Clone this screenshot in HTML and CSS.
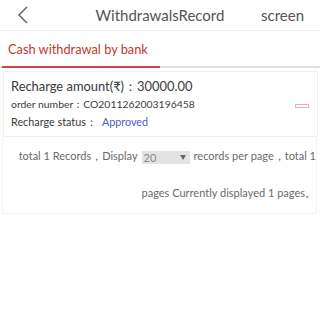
FILE: index.html
```html
<!DOCTYPE html>
<html>
<head>
<meta charset="utf-8">
<link rel="stylesheet" href="styles.css">
</head>
<body>
<div class="page">
  <header class="topbar">
    <svg class="back" width="12" height="18" viewBox="0 0 12 18"><path d="M10 1 L2 9 L10 17" fill="none" stroke="#666" stroke-width="1.5"/></svg>
    <div class="title">WithdrawalsRecord</div>
    <div class="screen">screen</div>
  </header>
  <nav class="tabs">
    <div class="tab active">Cash withdrawal by bank</div>
  </nav>
  <section class="card">
    <div class="info">
      <div class="amount">Recharge amount(₹)：30000.00</div>
      <div class="line">order number：CO2011262003196458</div>
      <div class="line status-line">Recharge status：<span class="status">Approved</span></div>
    </div>
    <div class="mark"></div>
  </section>
  <section class="pager">
    <p><span>total 1 Records，Display</span><span class="select">20</span><span>records per page，total 1</span> <span>pages Currently displayed 1 pages。</span></p>
  </section>
</div>
</body>
</html>
```
FILE: styles.css
```css
* { box-sizing: border-box; }
html, body { margin: 0; padding: 0; background: #fff; }
body { font-family: "Lato", "DejaVu Sans", sans-serif; color: #333; }
.page { width: 320px; overflow: hidden; }
.topbar {
  height: 31px;
  display: grid;
  grid-template-columns: 60px 1fr 60px;
  align-items: center;
  border-bottom: 1px solid #f0f0f0;
}
.back { margin-left: 17px; }
.title { text-align: center; font-size: 15px; color: #555; }
.screen { font-size: 15px; color: #555; padding-left: 1px; }
.tabs {
  height: 37px;
  border-bottom: 2px solid #e0e0e0;
  display: flex;
  padding-left: 2px;
}
.tab {
  width: 158px;
  font-size: 12.8px;
  color: #c0392b;
  padding: 10px 0 0 6px;
  margin-bottom: -2px;
  border-bottom: 2px solid #c84a40;
}
.card {
  margin: 3px 2px 0 3px;
  border: 1px solid #efefef;
  height: 66px;
  display: flex;
  align-items: center;
  padding: 0 8px 0 7px;
}
.info { flex: 1; }
.amount { font-size: 12.9px; color: #3a3a3a; line-height: 17px; margin-bottom: 1px; }
.line { font-size: 10.4px; color: #3a3a3a; line-height: 17px; }
.status-line { font-size: 10.8px; }
.status { color: #4b5bc8; margin-left: 5px; }
.mark { width: 14px; height: 4px; border: 1px solid #e8b0b0; margin-top: 4px; }
.pager {
  margin: 0 3px 0 2px;
  border: 1px solid #f3f3f3;
  border-top: none;
  padding: 0 0 2px 6px;
  text-align: right;
}
.pager p { margin: 0; font-size: 11px; color: #6a6a6a; line-height: 37px; }
.select {
  display: inline-block;
  position: relative;
  width: 48px;
  height: 13px;
  background: #e3e3e3;
  color: #888;
  padding: 0 0 0 2px;
  font-size: 11px;
  vertical-align: middle;
  line-height: 13px;
  margin: 0 4px;
  text-align: left;
}
.select::after {
  content: "";
  position: absolute;
  right: 4px;
  top: 4px;
  border-left: 3px solid transparent;
  border-right: 3px solid transparent;
  border-top: 5px solid #666;
}
```
